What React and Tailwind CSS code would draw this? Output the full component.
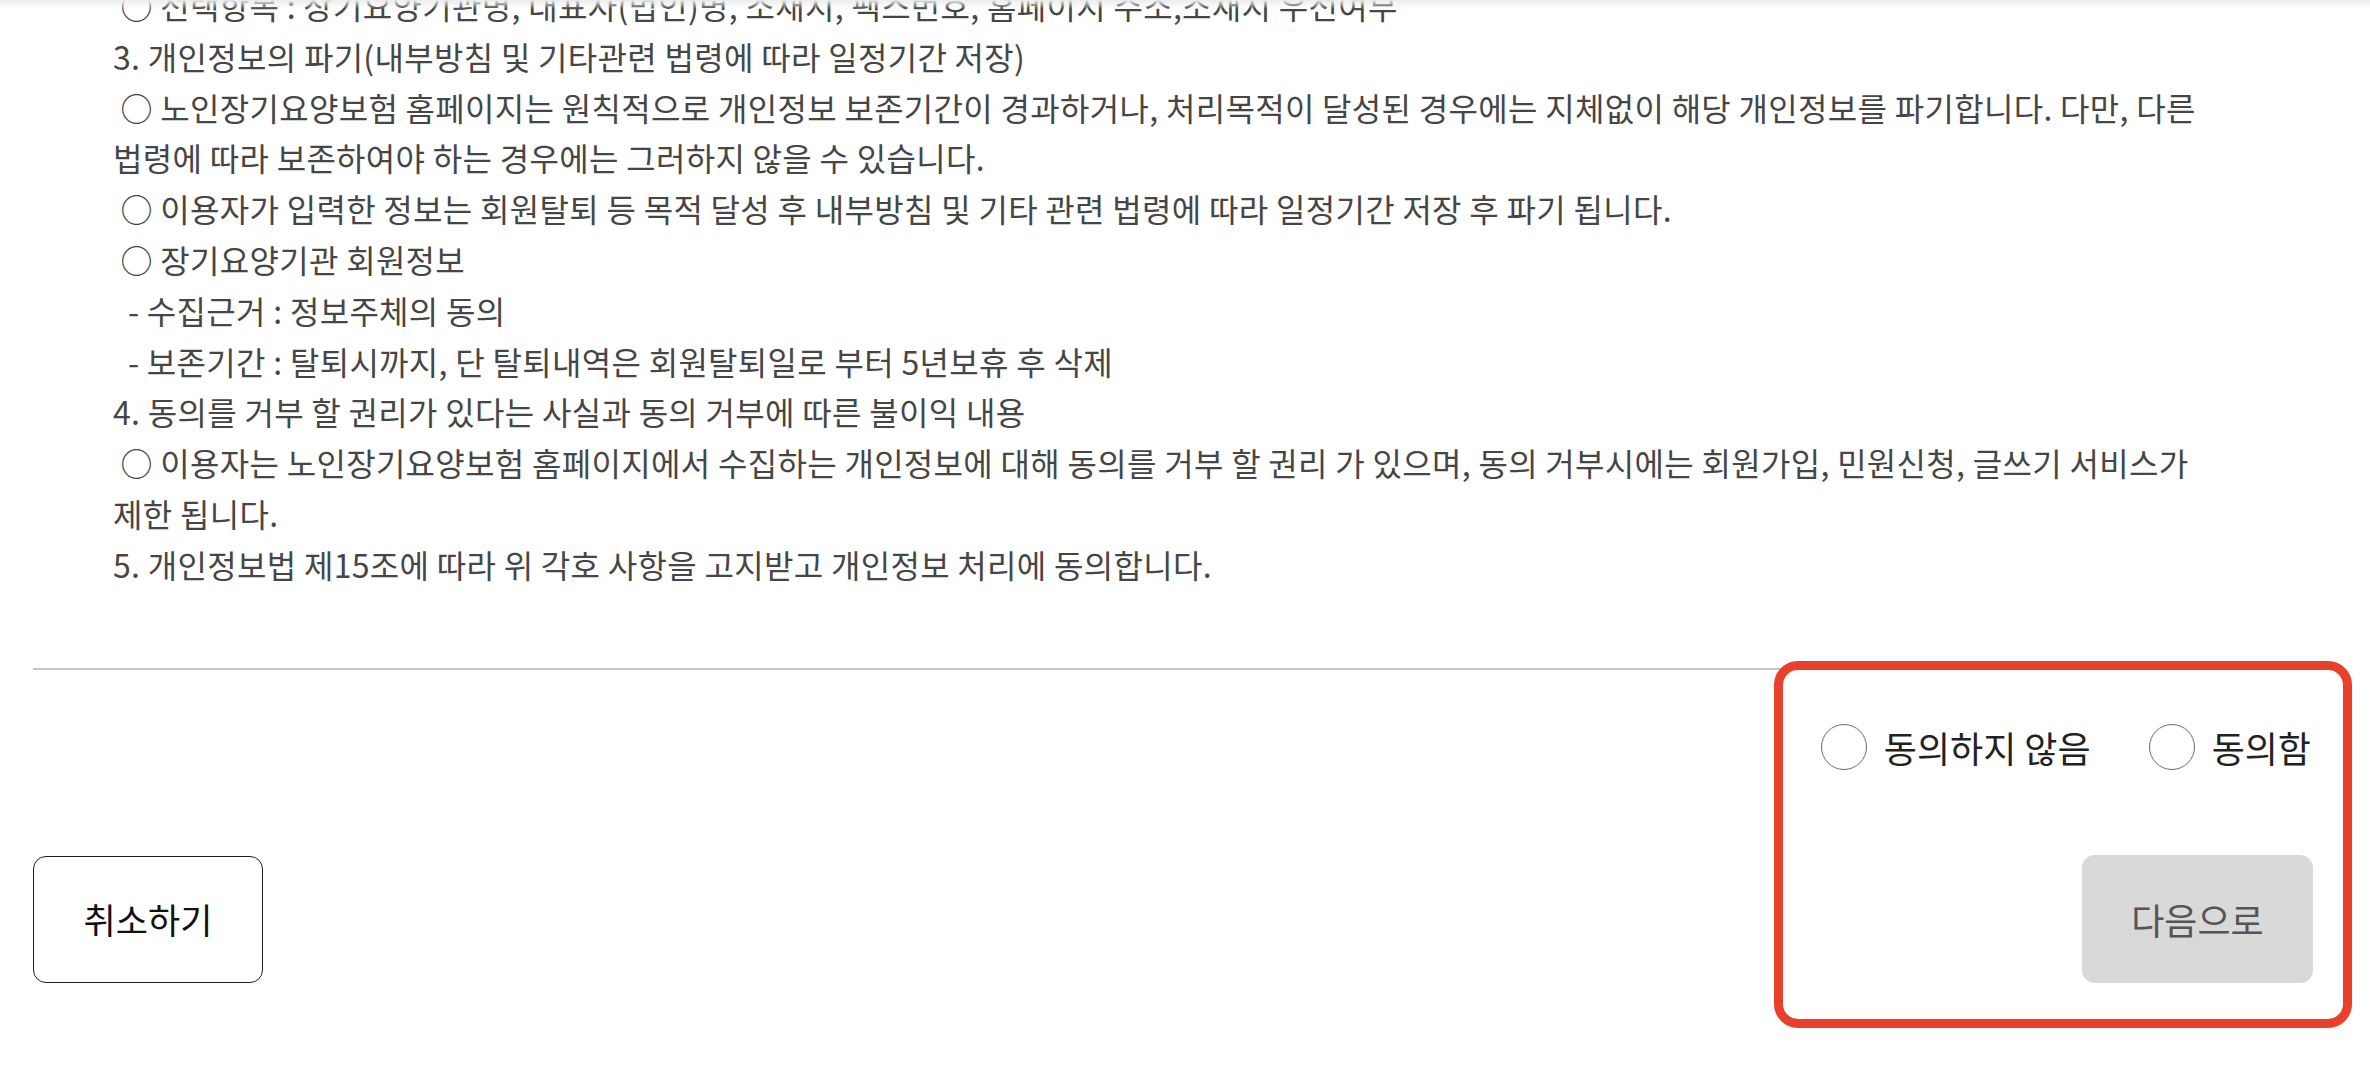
const lines = [
  " ○ 선택항목 : 장기요양기관명, 대표자(법인)명, 소재지, 팩스번호, 홈페이지 주소,소재지 우선여부",
  "3. 개인정보의 파기(내부방침 및 기타관련 법령에 따라 일정기간 저장)",
  " ○ 노인장기요양보험 홈페이지는 원칙적으로 개인정보 보존기간이 경과하거나, 처리목적이 달성된 경우에는 지체없이 해당 개인정보를 파기합니다. 다만, 다른",
  "법령에 따라 보존하여야 하는 경우에는 그러하지 않을 수 있습니다.",
  " ○ 이용자가 입력한 정보는 회원탈퇴 등 목적 달성 후 내부방침 및 기타 관련 법령에 따라 일정기간 저장 후 파기 됩니다.",
  " ○ 장기요양기관 회원정보",
  "  - 수집근거 : 정보주체의 동의",
  "  - 보존기간 : 탈퇴시까지, 단 탈퇴내역은 회원탈퇴일로 부터 5년보휴 후 삭제",
  "4. 동의를 거부 할 권리가 있다는 사실과 동의 거부에 따른 불이익 내용",
  " ○ 이용자는 노인장기요양보험 홈페이지에서 수집하는 개인정보에 대해 동의를 거부 할 권리 가 있으며, 동의 거부시에는 회원가입, 민원신청, 글쓰기 서비스가",
  "제한 됩니다.",
  "5. 개인정보법 제15조에 따라 위 각호 사항을 고지받고 개인정보 처리에 동의합니다.",
];

function Radio({ label }) {
  return (
    <label className="flex items-center gap-[17px] cursor-pointer">
      <span className="block h-[46px] w-[46px] rounded-full border-[1.5px] border-[#6b6b6b] bg-white" />
      <span className="text-[36px] leading-none text-[#222]">{label}</span>
    </label>
  );
}

export default function App() {
  return (
    <div
      className="relative h-[1076px] w-full overflow-hidden bg-white px-[33px]"
      style={{ fontFamily: '"Noto Sans CJK KR", "Noto Sans", sans-serif' }}
    >
      <div className="pointer-events-none absolute inset-x-0 top-0 h-[9px] bg-linear-to-b from-[#ededed] to-transparent" />

      <div className="-mt-[20px] pl-[80px] text-[32px] leading-[50.8px] tracking-[0.3px] text-[#464646]">
        {lines.map((t, i) => (
          <div key={i} className="whitespace-pre">
            {t}
          </div>
        ))}
      </div>

      <div className="mt-[78px] h-[2px] bg-[#c6c6c6]" />

      <div className="flex items-start justify-between">
        <button className="mt-[186px] flex h-[127px] w-[230px] items-center justify-center rounded-[13px] border-[1.5px] border-[#1f1f1f] bg-white text-[35px] text-[#111]">
          취소하기
        </button>

        <div className="relative -mr-[15px] -mt-[9px] flex h-[367px] w-[578px] flex-col rounded-[24px] border-[9px] border-[#e8402a] bg-white pr-[30px] pt-[54px]">
          <div className="flex justify-end gap-[58px] pr-[2px]">
            <Radio label="동의하지 않음" />
            <Radio label="동의함" />
          </div>
          <button
            disabled
            className="mt-[85px] flex h-[128px] w-[231px] items-center justify-center self-end rounded-[13px] bg-[#d9d9d9] text-[36px] text-[#555]"
          >
            다음으로
          </button>
        </div>
      </div>
    </div>
  );
}
